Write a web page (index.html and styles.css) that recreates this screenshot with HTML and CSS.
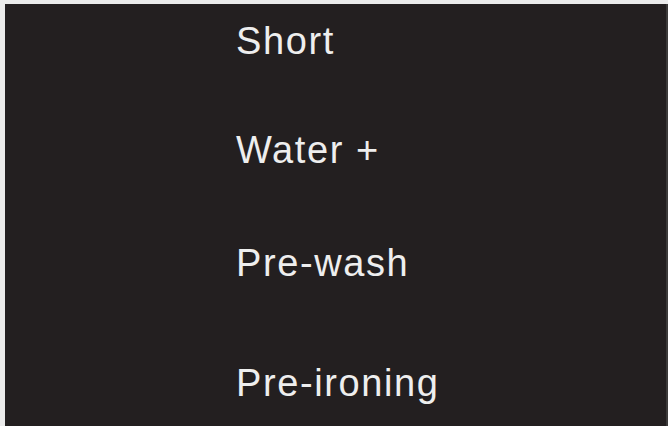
FILE: index.html
```html
<!DOCTYPE html>
<html lang="en">
<head>
<meta charset="utf-8">
<title>Programs</title>
<link rel="stylesheet" href="styles.css">
</head>
<body>
<div class="frame">
  <ul class="panel">
    <li class="option">Short</li>
    <li class="option opt-2">Water +</li>
    <li class="option opt-3">Pre-wash</li>
    <li class="option opt-4">Pre-ironing</li>
  </ul>
</div>
</body>
</html>
```

FILE: styles.css
```css
html, body {
  margin: 0;
  padding: 0;
  width: 668px;
  height: 426px;
  overflow: hidden;
  background: #ebebeb;
}

.frame {
  box-sizing: border-box;
  width: 668px;
  height: 426px;
  padding: 4px 0 0 5px;
}

.panel {
  box-sizing: border-box;
  list-style: none;
  margin: 0;
  height: 422px;
  padding: 17px 0 0 231px;
  background: #231f20;
  border-right: 2px solid #3c3a3a;
  display: flex;
  flex-direction: column;
}

.option {
  font-family: "Liberation Sans", Arial, sans-serif;
  font-size: 38px;
  line-height: 40px;
  letter-spacing: 1.6px;
  color: #eeeeee;
}

.opt-2 { margin-top: 69px; }
.opt-3 { margin-top: 73px; }
.opt-4 { margin-top: 80px; }
```
